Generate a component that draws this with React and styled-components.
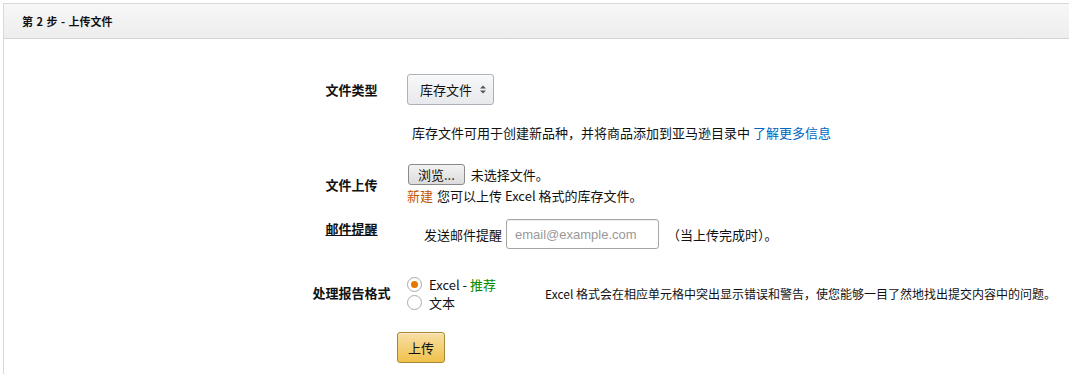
import React from "react";
import styled, { createGlobalStyle } from "styled-components";

const Global = createGlobalStyle`
  html, body { margin: 0; padding: 0; background: #fff; overflow: hidden; }
  body {
    font-family: "Noto Sans CJK SC", "Liberation Sans", sans-serif;
    font-size: 13px;
    color: #111;
  }
  * { box-sizing: border-box; }
`;

const Panel = styled.section`
  margin: 3px 0 0 3px;
  border: 1px solid #d8d8d8;
  border-right: none;
  border-bottom: none;
  height: calc(100vh - 3px);
`;

const Header = styled.header`
  height: 35px;
  display: flex;
  align-items: center;
  padding-left: 18px;
  background: linear-gradient(#f7f7f7, #ededed);
  border-bottom: 1px solid #d4d4d4;
  font-size: 11px;
  font-weight: bold;
  color: #111;
  word-spacing: 1px;
`;

const Body = styled.div`
  padding: 35px 0 0 292px;
  display: flex;
  flex-direction: column;
`;

const Row = styled.div`
  display: flex;
  align-items: ${(p) => p.$align || "center"};
  margin-top: ${(p) => p.$mt || 0}px;
`;

const Label = styled.div`
  width: 111px;
  text-align: center;
  font-weight: bold;
  font-size: 13px;
  line-height: 18px;
  text-decoration: ${(p) => (p.$underline ? "underline" : "none")};
  margin-top: ${(p) => p.$mt || 0}px;
  flex-shrink: 0;
`;

const Field = styled.div`
  display: flex;
  flex-direction: ${(p) => (p.$col ? "column" : "row")};
  align-items: ${(p) => (p.$col ? "flex-start" : "center")};
  padding-left: ${(p) => p.$pl || 0}px;
`;

const SelectBox = styled.div`
  height: 31px;
  width: 87px;
  border: 1px solid #adb1b8;
  border-radius: 3px;
  background: linear-gradient(#f7f8fa, #e7e9ec);
  display: flex;
  align-items: center;
  padding-left: 12px;
  gap: 8px;
  font-size: 13px;
  box-shadow: 0 1px 0 rgba(255,255,255,.6) inset;
`;

const Help = styled.div`
  padding-left: 116px;
  margin-top: 18px;
  line-height: 20px;
  font-size: 13px;
`;

const Link = styled.a`
  color: #0066c0;
  text-decoration: none;
`;

const BrowseBtn = styled.button`
  height: 21px;
  padding: 0 9px;
  margin-left: 1px;
  font-family: inherit;
  font-size: 13px;
  line-height: 17px;
  border: 1px solid #8a8a8a;
  border-radius: 3px;
  background: linear-gradient(#f2f2f2, #dcdcdc);
  color: #111;
  margin-right: 6px;
`;

const Line = styled.div`
  display: flex;
  align-items: center;
  line-height: 20px;
  margin-top: ${(p) => p.$mt || 0}px;
`;

const New = styled.span`
  color: #c45500;
  margin-right: 4px;
`;

const EmailInput = styled.input`
  width: 153px;
  height: 30px;
  margin: 0 8px 0 4px;
  border: 1px solid #a6a6a6;
  border-radius: 3px;
  padding: 0 8px;
  font-family: "Liberation Sans", "Noto Sans CJK SC", sans-serif;
  font-size: 13px;
  box-shadow: 0 1px 0 rgba(0,0,0,.07) inset;
  &::placeholder { color: #999; }
`;

const RadioGroup = styled.div`
  width: 138px;
  display: flex;
  flex-direction: column;
  flex-shrink: 0;
`;

const RadioRow = styled.label`
  display: flex;
  align-items: center;
  gap: 7px;
  line-height: 17px;
  height: 18px;
`;

const RadioDot = styled.span`
  width: 15px;
  height: 15px;
  border-radius: 50%;
  border: 1px solid #aaa;
  background: #fff;
  display: flex;
  align-items: center;
  justify-content: center;
  &::after {
    content: "";
    width: 7px;
    height: 7px;
    border-radius: 50%;
    background: ${(p) => (p.$checked ? "#e77600" : "transparent")};
  }
`;

const Green = styled.span`
  color: #008a00;
`;

const Desc = styled.div`
  font-size: 12px;
  line-height: 18px;
  margin-top: 2px;
`;

const UploadBtn = styled.button`
  margin: 21px 0 0 101px;
  width: 48px;
  height: 31px;
  font-family: inherit;
  font-size: 13px;
  color: #111;
  border: 1px solid #a88734;
  border-radius: 3px;
  background: linear-gradient(#f7dfa5, #f0c14b);
  box-shadow: 0 1px 0 rgba(255,255,255,.4) inset;
`;

export default function App() {
  return (
    <>
      <Global />
      <Panel>
        <Header>第 2 步 - 上传文件</Header>
        <Body>
          <Row>
            <Label>文件类型</Label>
            <Field>
              <SelectBox>
                库存文件
                <svg width="6" height="9" viewBox="0 0 6 9">
                  <path d="M0 3.5 L3 0.5 L6 3.5Z M0 5.5 L3 8.5 L6 5.5Z" fill="#555" />
                </svg>
              </SelectBox>
            </Field>
          </Row>
          <Help>
            库存文件可用于创建新品种，并将商品添加到亚马逊目录中 <Link href="#">了解更多信息</Link>
          </Help>
          <Row $mt={21}>
            <Label>文件上传</Label>
            <Field $col>
              <Line>
                <BrowseBtn>浏览...</BrowseBtn>未选择文件。
              </Line>
              <Line $mt={1}>
                <New>新建</New>您可以上传 Excel 格式的库存文件。
              </Line>
            </Field>
          </Row>
          <Row $mt={13} $align="flex-start">
            <Label $underline $mt={1}>邮件提醒</Label>
            <Field $pl={17}>
              发送邮件提醒
              <EmailInput placeholder="email@example.com" />
              （当上传完成时）。
            </Field>
          </Row>
          <Row $mt={26}>
            <Label>处理报告格式</Label>
            <Field>
              <RadioGroup>
                <RadioRow>
                  <RadioDot $checked />
                  <span>Excel - <Green>推荐</Green></span>
                </RadioRow>
                <RadioRow>
                  <RadioDot />
                  <span>文本</span>
                </RadioRow>
              </RadioGroup>
              <Desc>Excel 格式会在相应单元格中突出显示错误和警告，使您能够一目了然地找出提交内容中的问题。</Desc>
            </Field>
          </Row>
          <UploadBtn>上传</UploadBtn>
        </Body>
      </Panel>
    </>
  );
}
